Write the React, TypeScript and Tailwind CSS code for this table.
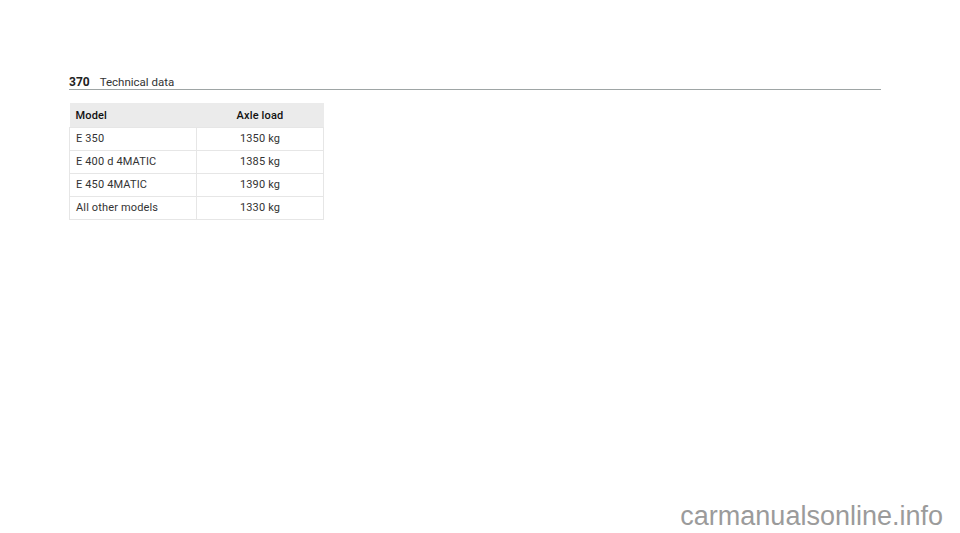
const rows = [
  { model: 'E 350', load: '1350 kg' },
  { model: 'E 400 d 4MATIC', load: '1385 kg' },
  { model: 'E 450 4MATIC', load: '1390 kg' },
  { model: 'All other models', load: '1330 kg' },
];

const App = () => {
  return (
    <div className="w-[960px] h-[533px] bg-white flex flex-col font-['Roboto',sans-serif] text-[#222]">
      <div className="ml-[69px] mr-[79px] pt-[77px] flex items-end gap-[8px] border-b border-[#9ea5a5] pb-[1px] text-[11.5px] leading-[11px]">
        <span className="font-bold text-[12px]">370</span>
        <span className="text-[#333] ml-[2px]">Technical data</span>
      </div>

      <table className="ml-[69px] mt-[13px] w-[255px] border-collapse text-[11px] tracking-[0.15px] text-[#333]">
        <thead>
          <tr className="bg-[#ebebeb] h-[24px]">
            <th className="w-[127px] text-left font-medium text-[#111] pl-[6px] pt-[3px]">Model</th>
            <th className="text-center font-medium text-[#111] pt-[3px]">Axle load</th>
          </tr>
        </thead>
        <tbody>
          {rows.map((r) => (
            <tr key={r.model} className="h-[23px]">
              <td className="border border-[#e6e6e6] pl-[6px] pt-[1px]">{r.model}</td>
              <td className="border border-[#e6e6e6] text-center pt-[1px]">{r.load}</td>
            </tr>
          ))}
        </tbody>
      </table>

      <div className="mt-auto self-end mr-[17px] mb-[2px] text-[27px] leading-[30px] text-[#9b9b9b] font-['Liberation_Sans',sans-serif]">
        carmanualsonline.info
      </div>
    </div>
  );
};

export default App;
